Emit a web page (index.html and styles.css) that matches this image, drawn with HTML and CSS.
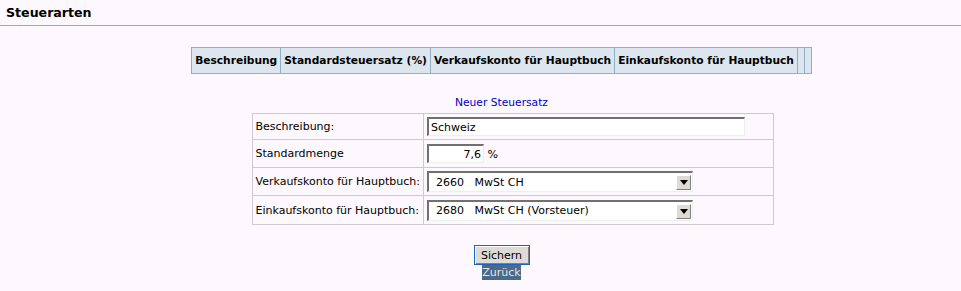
FILE: index.html
```html
<!DOCTYPE html>
<html>
  <head>
    <title>Steuerarten</title>
    <link rel="stylesheet" href="styles.css">
  </head>
  <body class="page">
    <div class="pagetitle">Steuerarten</div>

    <div class="content">
      <table class="listtable">
        <tr>
          <th>Beschreibung</th>
          <th>Standardsteuersatz (%)</th>
          <th>Verkaufskonto für Hauptbuch</th>
          <th>Einkaufskonto für Hauptbuch</th>
          <th class="blank"></th>
          <th class="blank"></th>
        </tr>
      </table>

      <div class="formhead">Neuer Steuersatz</div>
      <div class="formwrap">
        <table class="formtable">
          <tr>
            <td class="label">Beschreibung:</td>
            <td><input class="txt" type="text" value="Schweiz"></td>
          </tr>
          <tr>
            <td class="label">Standardmenge</td>
            <td><input class="num" type="text" value="7,6"> %</td>
          </tr>
          <tr>
            <td class="label">Verkaufskonto für Hauptbuch:</td>
            <td>
              <span class="selwrap">
                <select class="sel"><option>2660&nbsp;&nbsp;&nbsp;MwSt CH</option></select>
                <span class="arrow"><svg width="8" height="5" viewBox="0 0 8 5"><path d="M0 0 H8 L4 5 Z" fill="#000"/></svg></span>
              </span>
            </td>
          </tr>
          <tr>
            <td class="label">Einkaufskonto für Hauptbuch:</td>
            <td>
              <span class="selwrap">
                <select class="sel"><option>2680&nbsp;&nbsp;&nbsp;MwSt CH (Vorsteuer)</option></select>
                <span class="arrow"><svg width="8" height="5" viewBox="0 0 8 5"><path d="M0 0 H8 L4 5 Z" fill="#000"/></svg></span>
              </span>
            </td>
          </tr>
        </table>
      </div>

      <div class="buttons">
        <button class="savebtn">Sichern</button><br/>
        <a class="backlink" href="#">Zurück</a>
      </div>
    </div>
  </body>
</html>
```

FILE: styles.css
```css
.page {
  margin: 0;
  background-color: #fdf8fe;
  color: #000000;
  font-family: "DejaVu Sans", sans-serif;
  font-size: 11px;
}
.pagetitle {
  font-size: 12.6px;
  font-weight: bold;
  padding: 5px 6px 6px 6px;
  height: 14px;
  border-bottom: 1px solid #8bb0c2;
}
.content {
  padding-left: 42px;
}
.listtable {
  margin: 21px auto 0 auto;
  border-collapse: collapse;
  background-color: #dde6ee;
}
.listtable th {
  border: 1px solid #8fb0c1;
  font-size: 10.65px;
  font-weight: bold;
  padding: 0 3px;
  height: 25px;
  white-space: nowrap;
}
.listtable th.blank {
  padding: 0;
  width: 6px;
}
.formhead {
  text-align: center;
  color: #0000c8;
  font-size: 10.7px;
  margin-top: 22px;
  height: 14px;
}
.formwrap {
  padding-left: 22px;
  padding-top: 3px;
}
.formtable {
  margin: 0 auto;
  border-collapse: collapse;
  width: 522px;
}
.formtable td {
  border: 1px solid #cccccc;
  height: 25px;
  padding: 1px 3px;
  white-space: nowrap;
}
.formtable td.label {
  width: 163px;
}
.formtable tr:first-child td {
  height: 23px;
}
.formtable tr:last-child td {
  height: 26px;
}
.txt, .num {
  font-family: "DejaVu Sans", sans-serif;
  font-size: 11px;
  border: none;
  border-top: 2px solid #707070;
  border-left: 2px solid #707070;
  border-bottom: 1px solid #eeeeee;
  border-right: 1px solid #eeeeee;
  background-color: #ffffff;
  padding: 0 2px;
  box-sizing: border-box;
  height: 19px;
}
.txt {
  width: 318px;
}
.num {
  width: 57px;
  text-align: right;
}
.selwrap {
  position: relative;
  display: inline-block;
  vertical-align: middle;
}
.sel {
  display: block;
  font-family: "DejaVu Sans", sans-serif;
  font-size: 11px;
  width: 266px;
  height: 21px;
  border: none;
  border-top: 2px solid #707070;
  border-left: 2px solid #707070;
  border-bottom: 1px solid #eeeeee;
  border-right: 1px solid #eeeeee;
  background-color: #ffffff;
  padding: 0 0 0 7px;
  appearance: none;
  -webkit-appearance: none;
  color: #000000;
}
.arrow {
  position: absolute;
  right: 2px;
  top: 4px;
  width: 13px;
  height: 13px;
  background-color: #dedbd6;
  border-top: 1px solid #ffffff;
  border-left: 1px solid #ffffff;
  border-right: 1px solid #808080;
  border-bottom: 1px solid #808080;
  display: flex;
  align-items: center;
  justify-content: center;
}
.buttons {
  text-align: center;
  margin-top: 20px;
}
.savebtn {
  font-family: "DejaVu Sans", sans-serif;
  font-size: 11px;
  background-color: #dedbd6;
  border: 1px solid #1c64c0;
  box-shadow: inset 1px 1px 0 #ffffff, inset -1px -1px 0 #808080;
  padding: 2px 6px;
  height: 20px;
  width: 56px;
}
.backlink {
  display: inline-block;
  background-color: #4a6a88;
  color: #e0e6ee;
  text-decoration: none;
  padding: 1px 0;
  font-size: 11px;
}
```
